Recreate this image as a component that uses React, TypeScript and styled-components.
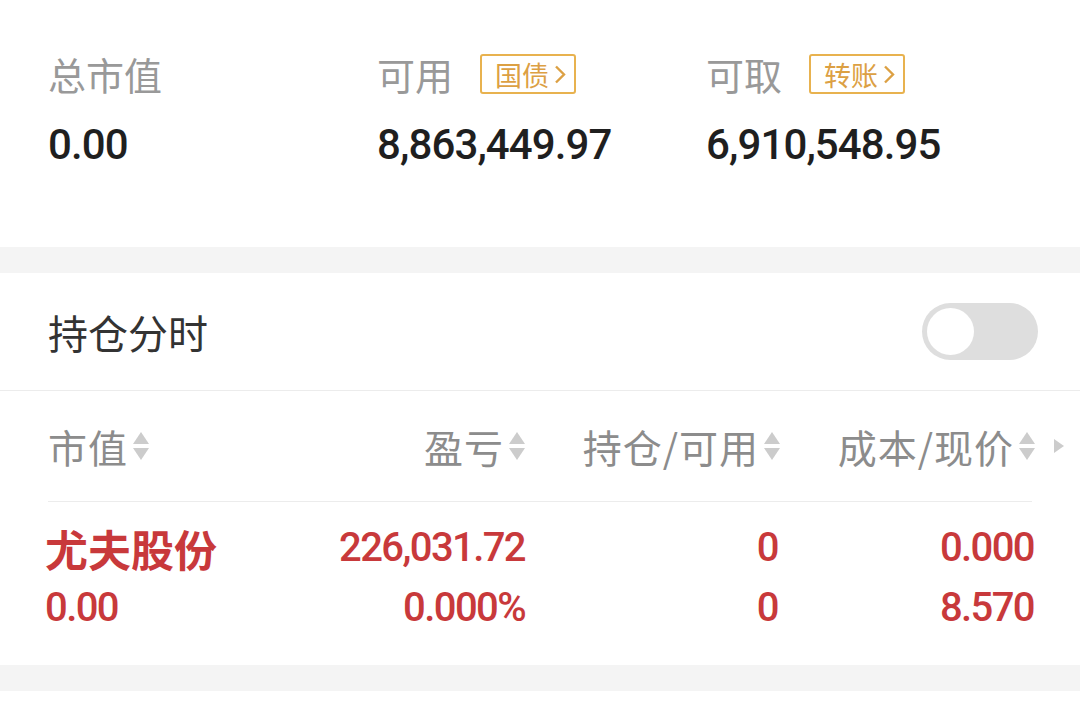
import styled, { createGlobalStyle } from "styled-components";

const GlobalStyle = createGlobalStyle`
  html, body {
    margin: 0;
    padding: 0;
    background: #ffffff;
  }
  body {
    font-family: "Noto Sans CJK SC", "Noto Sans", sans-serif;
    -webkit-font-smoothing: antialiased;
  }
`;

const NUM_FONT = `Roboto, "Noto Sans CJK SC", sans-serif`;

const summary = [
  { label: "总市值", value: "0.00" },
  { label: "可用", value: "8,863,449.97", badge: "国债" },
  { label: "可取", value: "6,910,548.95", badge: "转账" },
];

const columns = [
  { title: "市值", align: "left" },
  { title: "盈亏", align: "right" },
  { title: "持仓/可用", align: "right" },
  { title: "成本/现价", align: "right" },
];

const holdings = [
  {
    name: "尤夫股份",
    marketValue: "0.00",
    profit: "226,031.72",
    profitRate: "0.000%",
    position: "0",
    available: "0",
    cost: "0.000",
    price: "8.570",
  },
];

function SortIcon() {
  return (
    <svg width="20" height="34" viewBox="0 0 20 34">
      <path d="M10 3 L18 15 L2 15 Z" fill="#cccccc" />
      <path d="M2 19 L18 19 L10 31 Z" fill="#cccccc" />
    </svg>
  );
}

function App() {
  return (
    <Page>
      <GlobalStyle />
      <Summary>
        {summary.map((s) => (
          <SummaryItem key={s.label}>
            <LabelRow>
              <Label>{s.label}</Label>
              {s.badge && (
                <Badge>
                  {s.badge}
                  <Chevron viewBox="0 0 12 20">
                    <path d="M2 2 L10 10 L2 18" fill="none" stroke="#dca043" strokeWidth="2.4" />
                  </Chevron>
                </Badge>
              )}
            </LabelRow>
            <Amount>{s.value}</Amount>
          </SummaryItem>
        ))}
      </Summary>

      <Gap />

      <SwitchRow>
        <SwitchLabel>持仓分时</SwitchLabel>
        <Toggle>
          <Knob />
        </Toggle>
      </SwitchRow>

      <TableHead>
        {columns.map((c) => (
          <HeadCell key={c.title} $align={c.align}>
            <HeadText>{c.title}</HeadText>
            <SortIcon />
          </HeadCell>
        ))}
        <MoreCell>
          <svg width="14" height="18" viewBox="0 0 14 18">
            <path d="M2 2 L12 9 L2 16 Z" fill="#cccccc" />
          </svg>
        </MoreCell>
      </TableHead>
      <Divider />

      {holdings.map((h) => (
        <DataRow key={h.name}>
          <StockName>{h.name}</StockName>
          <Cell>{h.profit}</Cell>
          <Cell>{h.position}</Cell>
          <Cell>{h.cost}</Cell>
          <span />
          <Cell $align="left">{h.marketValue}</Cell>
          <Cell>{h.profitRate}</Cell>
          <Cell>{h.available}</Cell>
          <Cell>{h.price}</Cell>
          <span />
        </DataRow>
      ))}

      <Gap />
    </Page>
  );
}

const Page = styled.div`
  width: 1080px;
  height: 720px;
  overflow: hidden;
  background: #ffffff;
`;

const Summary = styled.div`
  display: grid;
  grid-template-columns: 329px 329px 1fr;
  padding: 52px 0 0 48px;
  height: 247px;
  box-sizing: border-box;
`;

const SummaryItem = styled.div`
  display: flex;
  flex-direction: column;
  gap: 28px;
`;

const LabelRow = styled.div`
  display: flex;
  align-items: center;
  gap: 27px;
  height: 44px;
`;

const Label = styled.span`
  font-size: 38px;
  color: #999999;
  line-height: 1;
`;

const Badge = styled.span`
  display: inline-flex;
  align-items: center;
  gap: 5px;
  height: 40px;
  box-sizing: border-box;
  padding: 0 8px 0 13px;
  border: 2px solid #e8b24f;
  border-radius: 3px;
  color: #dca043;
  font-size: 27px;
  line-height: 1;
`;

const Chevron = styled.svg`
  width: 12px;
  height: 21px;
`;

const Amount = styled.span`
  font-family: ${NUM_FONT};
  font-size: 42px;
  font-weight: 500;
  line-height: 1;
  color: #1f1f1f;
  letter-spacing: -0.9px;
`;

const Gap = styled.div`
  height: 26px;
  background: #f4f4f4;
`;

const SwitchRow = styled.div`
  display: flex;
  align-items: center;
  justify-content: space-between;
  height: 117px;
  padding: 0 42px 0 48px;
  border-bottom: 1px solid #ececec;
`;

const SwitchLabel = styled.span`
  font-size: 40px;
  color: #333333;
`;

const Toggle = styled.div`
  display: flex;
  align-items: center;
  width: 116px;
  height: 57px;
  padding: 0 5px;
  box-sizing: border-box;
  border-radius: 29px;
  background: #dedede;
`;

const Knob = styled.div`
  width: 47px;
  height: 47px;
  border-radius: 50%;
  background: #ffffff;
`;

const TableHead = styled.div`
  display: grid;
  grid-template-columns: 224px 255px 255px 255px 1fr;
  align-items: center;
  height: 110px;
  padding-left: 48px;
`;

const HeadCell = styled.div<{ $align?: string }>`
  display: flex;
  align-items: center;
  justify-content: ${(p) => (p.$align === "left" ? "flex-start" : "flex-end")};
  gap: 3px;
`;

const HeadText = styled.span`
  font-size: 39px;
  letter-spacing: 1px;
  color: #8c8c8c;
  line-height: 1;
`;

const MoreCell = styled.div`
  display: flex;
  justify-content: center;
`;

const Divider = styled.div`
  height: 1px;
  margin: 0 48px;
  background: #ececec;
`;

const DataRow = styled.div`
  display: grid;
  grid-template-columns: 222px 258px 253px 256px 1fr;
  grid-auto-rows: 60px;
  align-items: center;
  height: 163px;
  padding: 16px 0 0 45px;
  box-sizing: border-box;
  color: #c8393b;
`;

const StockName = styled.span`
  font-size: 43px;
  font-weight: 700;
  line-height: 1;
`;

const Cell = styled.span<{ $align?: string }>`
  font-family: ${NUM_FONT};
  font-size: 40px;
  font-weight: 500;
  line-height: 1;
  letter-spacing: -1.6px;
  text-align: ${(p) => (p.$align === "left" ? "left" : "right")};
`;

export default App;
